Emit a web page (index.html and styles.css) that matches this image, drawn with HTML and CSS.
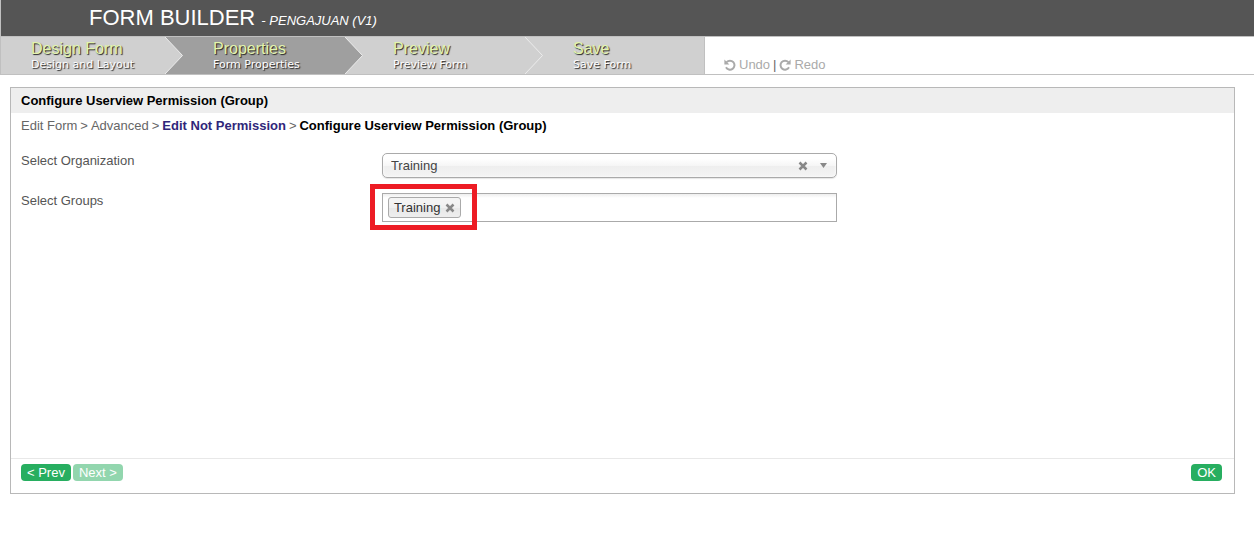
FILE: index.html
```html
<!DOCTYPE html>
<html lang="en">
<head>
<meta charset="utf-8">
<title>Form Builder</title>
<link rel="stylesheet" href="styles.css">
</head>
<body>
<header class="header">
  <h1 class="title">FORM BUILDER <em class="subtitle">- PENGAJUAN (V1)</em></h1>
</header>
<nav class="toolbar">
  <ol class="steps">
    <li class="step step-first">
      <a class="step-link" href="#design"><span class="step-name">Design Form</span><span class="step-note">Design and Layout</span></a>
      <svg class="arrow arrow-into-active" viewBox="0 0 18 37"><path class="arrow-fill" d="M0 0 17.500 18.500 0 37z"/><path class="arrow-edge" d="M0 0 17.500 18.500 0 37"/></svg>
    </li>
    <li class="step step-active">
      <a class="step-link" href="#properties"><span class="step-name">Properties</span><span class="step-note">Form Properties</span></a>
      <svg class="arrow" viewBox="0 0 18 37"><path class="arrow-fill" d="M0 0 17.500 18.500 0 37z"/><path class="arrow-edge" d="M0 0 17.500 18.500 0 37"/></svg>
    </li>
    <li class="step">
      <a class="step-link" href="#preview"><span class="step-name">Preview</span><span class="step-note">Preview Form</span></a>
      <svg class="arrow" viewBox="0 0 18 37"><path class="arrow-edge" d="M0 0 17.500 18.500 0 37"/></svg>
    </li>
    <li class="step step-last">
      <a class="step-link" href="#save"><span class="step-name">Save</span><span class="step-note">Save Form</span></a>
    </li>
  </ol>
  <div class="history">
    <button class="history-button" type="button" disabled><svg class="history-icon" viewBox="0 0 12 12"><path class="history-stroke" d="M2.600 3.200A4.500 4.500 0 1 1 2 8.300"/><path class="history-head" d="M.4 .4V5.400H5.400z"/></svg>Undo</button>
    <span class="separator">|</span>
    <button class="history-button" type="button" disabled><svg class="history-icon" viewBox="0 0 12 12"><path class="history-stroke" d="M9.400 3.200A4.500 4.500 0 1 0 10 8.300"/><path class="history-head" d="M11.600 .4V5.400H6.600z"/></svg>Redo</button>
  </div>
</nav>
<main class="panel">
  <h2 class="panel-title">Configure Userview Permission (Group)</h2>
  <div class="breadcrumb"><span>Edit Form</span><span>&gt;</span><span>Advanced</span><span>&gt;</span><a class="crumb-link" href="#permission">Edit Not Permission</a><span>&gt;</span><strong class="crumb-current">Configure Userview Permission (Group)</strong></div>
  <form class="fields">
    <div class="field">
      <label class="label" for="organization">Select Organization</label>
      <div class="control">
        <select class="select" id="organization"><option>Training</option></select>
        <button class="clear" type="button" aria-label="Clear organization"><svg class="cross" viewBox="0 0 10 10"><path d="M1.500 1.500 8.500 8.500M8.500 1.500 1.500 8.500"/></svg></button>
        <svg class="caret" viewBox="0 0 7 5"><path d="M0 0H7L3.500 5z"/></svg>
      </div>
    </div>
    <div class="field">
      <label class="label" for="groups">Select Groups</label>
      <div class="control tags">
        <span class="tag">Training<button class="remove" type="button" aria-label="Remove Training"><svg class="cross" viewBox="0 0 10 10"><path d="M1.500 1.500 8.500 8.500M8.500 1.500 1.500 8.500"/></svg></button></span>
        <input class="tag-input" id="groups" type="text">
        <div class="highlight"></div>
      </div>
    </div>
  </form>
  <footer class="actions">
    <button class="button" type="button">&lt; Prev</button>
    <button class="button" type="button" disabled>Next &gt;</button>
    <button class="button button-ok" type="button">OK</button>
  </footer>
</main>
</body>
</html>
```

FILE: styles.css
```css
* {
  box-sizing: border-box;
}

body {
  margin: 0;
  background: #fff;
  color: #555;
  font: 13px/15px "Liberation Sans", Arial, sans-serif;
}

button,
input,
select {
  font: inherit;
}

.header {
  padding: 5px 88px;
  background: #555;
  border-left: 1px solid #c0c0c0;
}

.title {
  margin: 0;
  color: #fff;
  font-size: 22px;
  font-weight: normal;
  line-height: 26px;
}

.subtitle {
  font-size: 13px;
  line-height: 15px;
}

.toolbar {
  display: flex;
  border-top: 1px solid #c0c0c0;
  border-bottom: 1px solid #c0c0c0;
}

.steps {
  display: flex;
  margin: 0;
  padding: 0;
  list-style: none;
  border-left: 1px solid #c0c0c0;
  border-right: 1px solid #c0c0c0;
}

.step {
  display: flex;
  width: 180px;
  height: 37px;
  background: #d0d0d0;
}

.step-first {
  width: 182px;
}

.step-active {
  background: #9f9f9f;
}

.step-last {
  width: 161px;
}

.step-link {
  display: flex;
  flex: 1;
  flex-direction: column;
  padding: 3px 0 0 30px;
  color: #fff;
  text-decoration: none;
  white-space: nowrap;
}

.step-name {
  color: #e3f4ac;
  font-size: 16px;
  line-height: 18px;
  text-shadow: 1px 1px 1px #222;
}

.step-note {
  font: 11px/14px "DejaVu Sans", Verdana, sans-serif;
  text-shadow: 1px 1px 1px #222;
}

.arrow {
  width: 18px;
  height: 37px;
  background: #d0d0d0;
}

.arrow-into-active {
  background: #9f9f9f;
}

.arrow-fill {
  fill: #d0d0d0;
}

.step-active .arrow-fill {
  fill: #9f9f9f;
}

.arrow-edge {
  fill: none;
  stroke: #ececec;
  stroke-width: 1;
}

.history {
  display: flex;
  align-items: flex-end;
  gap: 3px;
  padding: 0 19px 2px;
}

.history-button {
  display: flex;
  align-items: center;
  gap: 3px;
  padding: 0;
  border: 0;
  background: none;
  color: #aaa;
}

.separator {
  color: #666;
}

.history-icon {
  width: 12px;
  height: 12px;
}

.history-stroke {
  fill: none;
  stroke: #aaa;
  stroke-width: 2;
}

.history-head {
  fill: #aaa;
}

.panel {
  display: flex;
  flex-direction: column;
  margin: 12px 19px 0 10px;
  border: 1px solid #b8b8b8;
}

.panel-title {
  margin: 0;
  padding: 5px 10px;
  background: #eee;
  color: #000;
  font-size: 13px;
  line-height: 15px;
}

.breadcrumb {
  display: flex;
  gap: 3px;
  padding: 5px 10px;
  color: #666;
}

.crumb-link {
  color: #30267a;
  font-weight: bold;
  text-decoration: none;
}

.crumb-current {
  color: #000;
}

.fields {
  display: flex;
  flex-direction: column;
  gap: 15px;
  min-height: 320px;
  padding: 15px 10px;
}

.field {
  display: grid;
  grid-template-columns: 30% 455px;
}

.label {
  color: #555;
}

.control {
  position: relative;
}

.select {
  display: block;
  width: 100%;
  height: 25px;
  padding: 0 8px;
  border: 1px solid #aaa;
  border-radius: 5px;
  appearance: none;
  background: linear-gradient(#fff 20%, #f6f6f6 50%, #eee 52%, #f4f4f4 100%);
  box-shadow: inset 0 0 3px #fff, 0 1px 1px rgba(0, 0, 0, 0.1);
  color: #444;
}

.clear {
  position: absolute;
  top: 8px;
  right: 29px;
  display: flex;
  padding: 0;
  border: 0;
  background: none;
}

.cross {
  width: 10px;
  height: 10px;
  fill: none;
  stroke: #888;
  stroke-width: 2.500;
}

.caret {
  position: absolute;
  top: 10px;
  right: 10px;
  width: 7px;
  height: 5px;
  fill: #888;
  pointer-events: none;
}

.tags {
  display: flex;
  align-items: center;
  padding: 3px 5px;
  border: 1px solid #aaa;
  background: linear-gradient(#eee, #fff 4px);
}

.tag {
  display: flex;
  align-items: center;
  gap: 5px;
  padding: 2px 5px;
  border: 1px solid #aaa;
  border-radius: 3px;
  background: linear-gradient(#f4f4f4 20%, #f0f0f0 50%, #e8e8e8 52%, #eee 100%);
  color: #333;
  line-height: 15px;
}

.remove {
  display: flex;
  padding: 0;
  border: 0;
  background: none;
}

.tag-input {
  flex: 1;
  min-width: 0;
  height: 17px;
  border: 0;
  outline: 0;
  background: none;
}

.highlight {
  position: absolute;
  top: -10px;
  left: -13px;
  width: 107px;
  height: 46px;
  border: 5px solid #ed1c24;
  pointer-events: none;
}

.actions {
  display: flex;
  gap: 2px;
  padding: 5px 12px 12px 10px;
  border-top: 1px solid #e8e8e8;
}

.button {
  padding: 1px 6px;
  border: 0;
  border-radius: 4px;
  background: #27ae60;
  color: #fff;
}

.button:disabled {
  opacity: 0.5;
}

.button-ok {
  margin-left: auto;
}
```
